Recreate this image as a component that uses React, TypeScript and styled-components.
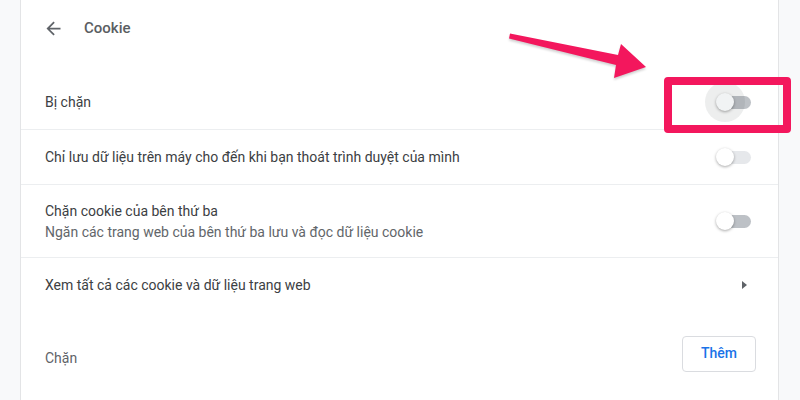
import styled, { createGlobalStyle } from "styled-components"

const GlobalStyle = createGlobalStyle`
    html, body {
        margin: 0;
        padding: 0;
        background: #f8f9fa;
        font-family: Roboto, "Noto Sans", "Liberation Sans", sans-serif;
        -webkit-font-smoothing: antialiased;
    }
`;

interface SettingRow {
    label: string;
    sub?: string;
    toggle: "on" | "off" | "disabled";
    ripple?: boolean;
}

const rows: SettingRow[] = [
    { label: "Bị chặn", toggle: "off", ripple: true },
    { label: "Chỉ lưu dữ liệu trên máy cho đến khi bạn thoát trình duyệt của mình", toggle: "disabled" },
    { label: "Chặn cookie của bên thứ ba", sub: "Ngăn các trang web của bên thứ ba lưu và đọc dữ liệu cookie", toggle: "off" },
];

const Toggle = ({ state, ripple }: { state: SettingRow["toggle"]; ripple?: boolean }) => (
    <ToggleWrap>
        <Track $disabled={state === "disabled"} />
        {ripple && <Ripple />}
        <Knob $ripple={ripple} />
    </ToggleWrap>
);

export default function App() {
    return (
        <>
            <GlobalStyle />
            <Page>
                <Card>
                    <Header>
                        <BackButton>
                            <svg width="21" height="21" viewBox="0 0 24 24">
                                <path d="M20 11H7.83l5.59-5.59L12 4l-8 8 8 8 1.41-1.41L7.83 13H20v-2z" fill="#5f6368" />
                            </svg>
                        </BackButton>
                        <Title>Cookie</Title>
                    </Header>
                    <List>
                        {rows.map((row) => (
                            <Row key={row.label} $tall={!!row.sub}>
                                <TextBlock>
                                    <Label>{row.label}</Label>
                                    {row.sub && <SubLabel>{row.sub}</SubLabel>}
                                </TextBlock>
                                <Toggle state={row.toggle} ripple={row.ripple} />
                            </Row>
                        ))}
                        <Row>
                            <Label>Xem tất cả các cookie và dữ liệu trang web</Label>
                            <Caret />
                        </Row>
                    </List>
                    <SectionRow>
                        <SectionLabel>Chặn</SectionLabel>
                        <AddButton>Thêm</AddButton>
                    </SectionRow>
                </Card>

                <Highlight />
                <Arrow width="800" height="400" viewBox="0 0 800 400">
                    <defs>
                        <filter id="soft" x="-10%" y="-30%" width="120%" height="160%">
                            <feGaussianBlur stdDeviation="1.2" />
                        </filter>
                    </defs>
                    <polygon
                        points="510,35.5 618,57 621,46 646,69 614,80 616,67 509,40.5"
                        fill="rgba(0,0,0,0.18)"
                        filter="url(#soft)"
                    />
                    <polygon
                        points="510,33.5 618,55 621,44 646,67 614,78 616,65 509,38.5"
                        fill="#f3175d"
                    />
                </Arrow>
            </Page>
        </>
    );
}

const Page = styled.div`
    position: relative;
    display: flex;
    width: 800px;
    height: 400px;
    padding: 0 21px 0 20px;
    box-sizing: border-box;
    overflow: hidden;
`;

const Card = styled.div`
    flex: 1;
    display: flex;
    flex-direction: column;
    background: #fff;
    border-left: 1px solid #e3e4e6;
    border-right: 1px solid #e3e4e6;
`;

const Header = styled.div`
    display: flex;
    align-items: center;
    height: 56px;
    padding-left: 22px;
    gap: 20px;
`;

const BackButton = styled.div`
    display: flex;
    width: 21px;
    height: 21px;
`;

const Title = styled.div`
    font-size: 15px;
    font-weight: 500;
    color: #5a5e62;
`;

const List = styled.div`
    display: flex;
    flex-direction: column;
    margin-top: 19px;
`;

const Row = styled.div<{ $tall?: boolean }>`
    display: flex;
    align-items: center;
    justify-content: space-between;
    height: ${({ $tall }) => ($tall ? "72px" : "54px")};
    padding: 0 26px 0 24px;
    border-bottom: 1px solid #eceef0;
    &:last-child {
        border-bottom: none;
    }
`;

const TextBlock = styled.div`
    display: flex;
    flex-direction: column;
    gap: 5px;
`;

const Label = styled.div`
    font-size: 14px;
    color: #3c4043;
`;

const SubLabel = styled.div`
    font-size: 14px;
    color: #62666a;
`;

const ToggleWrap = styled.div`
    position: relative;
    width: 36px;
    height: 18px;
    display: flex;
    align-items: center;
`;

const Track = styled.div<{ $disabled?: boolean }>`
    margin-left: 1px;
    width: 34px;
    height: 13px;
    border-radius: 7px;
    background: ${({ $disabled }) => ($disabled ? "#e6e8eb" : "#bdc1c6")};
`;

const Ripple = styled.div`
    position: absolute;
    left: -11px;
    top: -11px;
    width: 40px;
    height: 40px;
    border-radius: 50%;
    background: rgba(60, 64, 67, 0.09);
`;

const Knob = styled.div<{ $ripple?: boolean }>`
    position: absolute;
    left: 0;
    top: 0;
    width: 18px;
    height: 18px;
    border-radius: 50%;
    background: ${({ $ripple }) => ($ripple ? "#f1f3f4" : "#fff")};
    box-shadow: 0 1px 3px rgba(0, 0, 0, 0.35);
`;

const Caret = styled.div`
    width: 0;
    height: 0;
    margin-right: 5px;
    border-top: 4px solid transparent;
    border-bottom: 4px solid transparent;
    border-left: 5px solid #5f6368;
`;

const SectionRow = styled.div`
    display: flex;
    align-items: center;
    justify-content: space-between;
    margin-top: 24px;
    height: 36px;
    padding: 0 22px 0 24px;
`;

const SectionLabel = styled.div`
    font-size: 14px;
    color: #5f6368;
    padding-top: 7px;
`;

const AddButton = styled.button`
    width: 74px;
    height: 36px;
    padding: 0 0 3px;
    background: #fff;
    border: 1px solid #dadce0;
    border-radius: 4px;
    color: #1a73e8;
    font-family: Roboto, "Noto Sans", sans-serif;
    font-size: 14px;
    font-weight: 500;
`;

const Highlight = styled.div`
    position: absolute;
    left: 664px;
    top: 77px;
    width: 127px;
    height: 56px;
    box-sizing: border-box;
    border: 8px solid #f3175d;
    border-radius: 4px;
`;

const Arrow = styled.svg`
    position: absolute;
    left: 0;
    top: 0;
    pointer-events: none;
`;
